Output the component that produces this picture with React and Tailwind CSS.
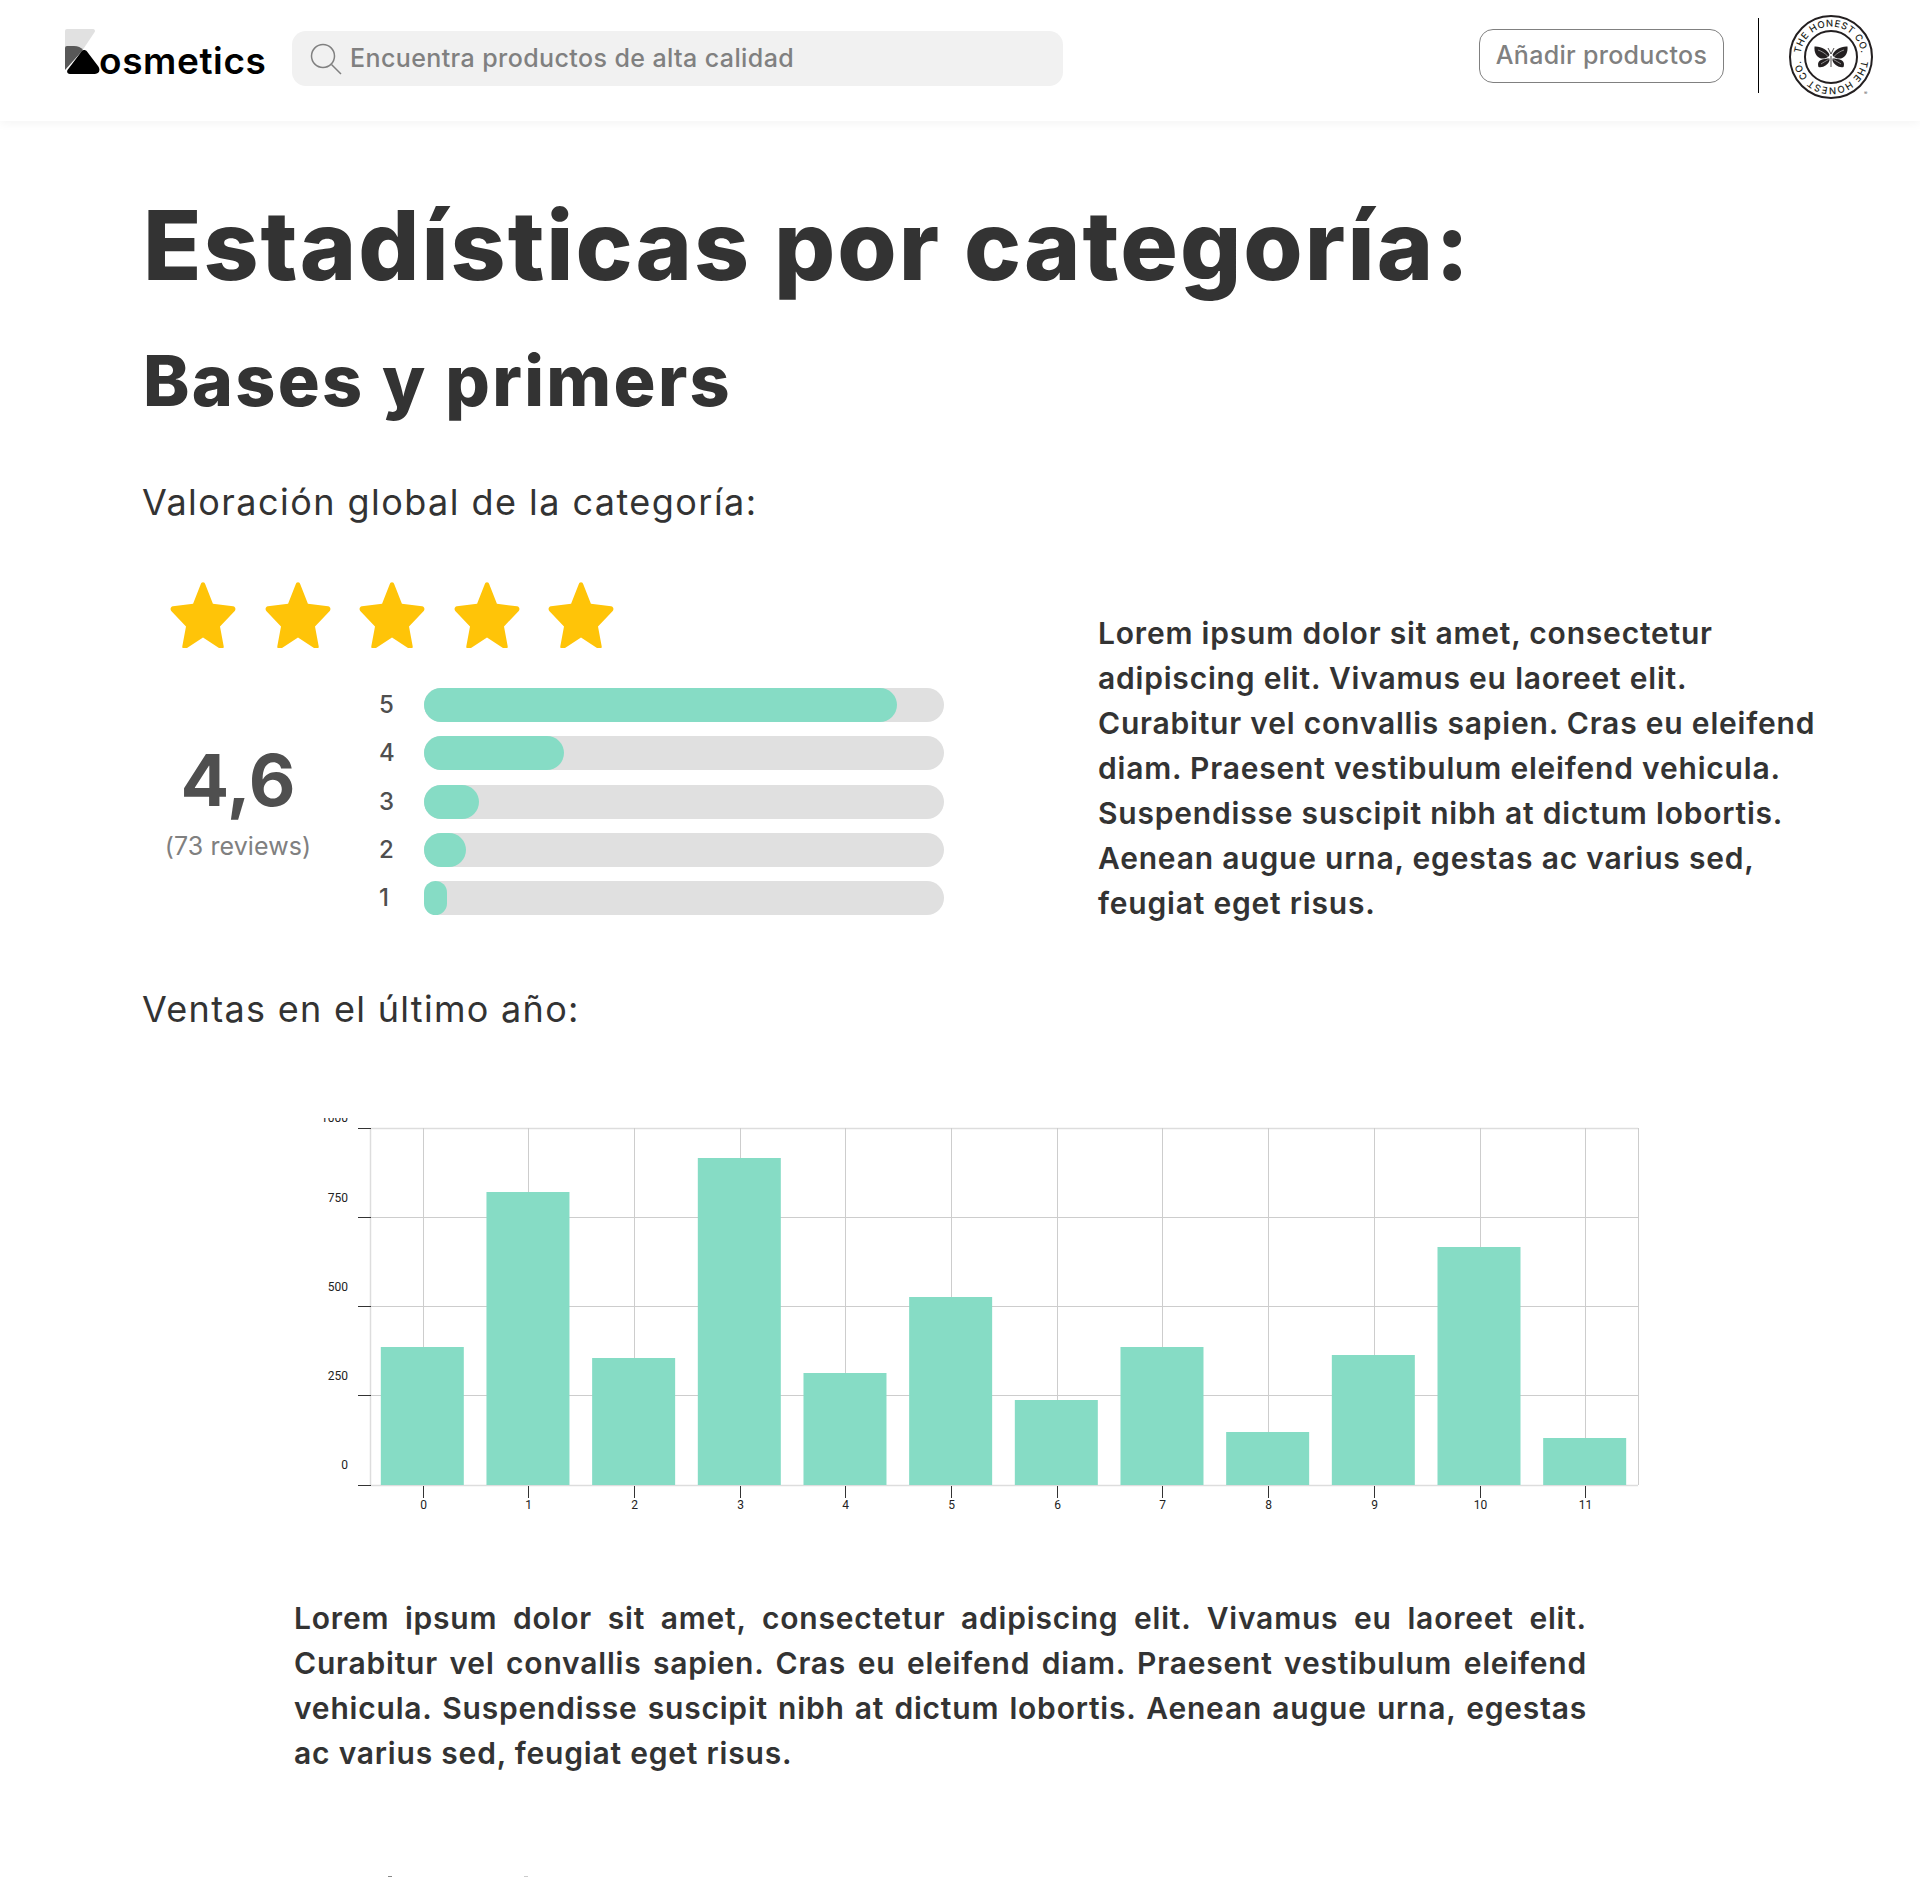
import React from "react";

const sans = "font-['Inter','Liberation_Sans',sans-serif]";

const ratings = [
  { label: 5, width: 473 },
  { label: 4, width: 140 },
  { label: 3, width: 55 },
  { label: 2, width: 42 },
  { label: 1, width: 23 },
];

// top of each bar in the sales chart, in page pixels
const sales = [1347, 1192, 1358, 1158, 1373, 1297, 1400, 1347, 1432, 1355, 1247, 1438];

const LOREM =
  "Lorem ipsum dolor sit amet, consectetur adipiscing elit. Vivamus eu laoreet elit. Curabitur vel convallis sapien. Cras eu eleifend diam. Praesent vestibulum eleifend vehicula. Suspendisse suscipit nibh at dictum lobortis. Aenean augue urna, egestas ac varius sed, feugiat eget risus.";

const Star = () => (
  <svg width="68" height="68" viewBox="0 0 24 24" className="shrink-0">
    <path
      d="M12 .8c.4 0 .7.3.8.7l2.7 6.9 7.1.9c.8.1 1.1 1 .6 1.6l-5.2 5.5 1.3 7c.1.7-.6 1.3-1.2.9L12 20.300l-6.100 4c-.6.4-1.300-.2-1.200-.9l1.300-7-5.200-5.500c-.5-.6-.2-1.500.6-1.600l7.100-.9 2.700-6.900c.1-.4.400-.7.800-.7z"
      fill="#ffc408"
    />
  </svg>
);

const Logo = () => (
  <div className="flex items-end w-[200px] h-[45px] mt-[29px]">
    <svg width="35" height="45" viewBox="0 0 35 45" className="shrink-0">
      <path d="M0 2a2 2 0 0 1 2-2h26a2 2 0 0 1 1.700 3L17 22 0 20z" fill="#e1e1e1" />
      <path d="M0 19q0-2 2-2h7c4 0 7 1.500 9 4L0 41z" fill="#585858" />
      <path d="M16.500 22.500c1.500-2 4-2 5.500 0L33 37c3 4 1 8-3 8H5c-2.500 0-3.500-2-2.500-4z" fill="#000" />
    </svg>
    <span className={`${sans} -ml-px text-[37px] leading-[26px] font-semibold text-black tracking-[0.6px]`}>osmetics</span>
  </div>
);

const ButterflySide = () => (
  <g>
    <path d="M41.500 41C40 36 33 32 26.500 32.500 26 38 28 43 33 44.500c3 .5 7-.5 8.500-3.500z" fill="#231f20" />
    <path d="M41.500 44.500c-3 0-6 .5-8.500 1.500-3 1.500-3.500 4-2.500 7 4.500 1 9.500-2 11-6.500z" fill="#231f20" />
    <path d="M30 36c3 1 7 3 10 6.500M33 50c2-1.500 5-3 7.500-4.500" fill="none" stroke="#fff" strokeWidth="0.500" />
  </g>
);

const HonestLogo = () => (
  <svg width="86" height="86" viewBox="0 0 86 86" className="shrink-0">
    <defs>
      <path id="ring-path" d="M12.500 43a30.500 30.500 0 1 1 61 0a30.500 30.500 0 1 1-61 0" />
    </defs>
    <circle cx="43" cy="43" r="41" fill="none" stroke="#231f20" strokeWidth="2" />
    <circle cx="43" cy="43" r="26" fill="none" stroke="#231f20" strokeWidth="2" />
    <text fontFamily="Inter, sans-serif" fontSize="9.500" fontWeight="500" fill="#231f20" letterSpacing="0.600">
      <textPath href="#ring-path" startOffset="25%" textAnchor="middle">THE HONEST CO.</textPath>
    </text>
    <text fontFamily="Inter, sans-serif" fontSize="9.500" fontWeight="500" fill="#231f20" letterSpacing="0.600" transform="rotate(180 43 43)">
      <textPath href="#ring-path" startOffset="25%" textAnchor="middle">THE HONEST CO.</textPath>
    </text>
    <ButterflySide />
    <g transform="matrix(-1 0 0 1 86 0)">
      <ButterflySide />
    </g>
    <path d="M43 42v11M40 34l3 6 3-6" fill="none" stroke="#231f20" strokeWidth="0.800" />
    <text x="76" y="81" fontFamily="Inter, sans-serif" fontSize="5" fill="#555">®</text>
  </svg>
);

const Header = () => (
  <header className="h-[121px] bg-white shadow-[0_2px_10px_rgba(0,0,0,0.05)] flex items-start pl-[65px] pr-[46px]">
    <Logo />
    <div className="ml-[27px] mt-[31px] w-[771px] h-[55px] bg-[#f1f1f1] rounded-[14px] flex items-center pl-[18px] gap-[8px]">
      <svg width="32" height="32" viewBox="0 0 32 32" fill="none" stroke="#808080" strokeWidth="1.500" className="shrink-0">
        <circle cx="13" cy="13" r="11.500" />
        <path d="M21.500 21.500 31 31" />
      </svg>
      <span className={`${sans} pt-[1px] text-[25px] font-medium text-[#808080] tracking-[0.4px]`}>Encuentra productos de alta calidad</span>
    </div>
    <button className={`${sans} ml-auto mt-[29px] w-[245px] h-[54px] border border-[#808080] rounded-[14px] text-[25px] font-medium text-[#808080] tracking-[0.3px]`}>
      Añadir productos
    </button>
    <div className="ml-[34px] mt-[18px] w-px h-[75px] bg-black" />
    <div className="ml-[29px] mt-[14px]">
      <HonestLogo />
    </div>
  </header>
);

const RatingSummary = () => (
  <div className="w-[955px] shrink-0">
    <div className="flex gap-[26.500px] pl-[26px]">
      <Star /><Star /><Star /><Star /><Star />
    </div>
    <div className="flex mt-[40px]">
      <div className="w-[190px] flex flex-col items-center pt-[52px]">
        <div className={`${sans} text-[72px] leading-[80px] font-bold text-[#4f4f4f]`}>4,6</div>
        <div className={`${sans} mt-[8px] text-[25px] leading-[36px] text-[#808080] tracking-[0.1px]`}>(73 reviews)</div>
      </div>
      <div className="ml-[46px] flex flex-col gap-[14.300px]">
        {ratings.map((r) => (
          <div key={r.label} className="flex items-center h-[34px]">
            <span className={`${sans} w-[45px] text-[24px] font-medium text-[#4f4f4f]`}>{r.label}</span>
            <div className="w-[520px] h-[34px] rounded-full bg-[#e0e0e0]">
              <div className="h-full rounded-full bg-[#86dcc5]" style={{ width: r.width }} />
            </div>
          </div>
        ))}
      </div>
    </div>
  </div>
);

const SalesChart = () => {
  const base = 1485;
  const slot = 105.67;
  const x0 = 423.3;
  const gridX = (i) => Math.floor(x0 + i * slot) + 0.5;
  return (
    <svg width="1340" height="410" viewBox="320 1112 1340 410" className="block">
      <defs>
        <clipPath id="chart-clip">
          <rect x="320" y="1118" width="1340" height="410" />
        </clipPath>
      </defs>
      <g clipPath="url(#chart-clip)" fontFamily="Roboto, sans-serif" fontSize="12" fill="#222">
        {[1217, 1306, 1395].map((y) => (
          <line key={y} x1="371" x2="1638" y1={y + 0.5} y2={y + 0.5} stroke="#cdcdcd" />
        ))}
        <line x1="371" x2="1638" y1="1128.500" y2="1128.500" stroke="#dddddd" strokeWidth="1.500" />
        <line x1="371" x2="1638" y1="1485.500" y2="1485.500" stroke="#dddddd" strokeWidth="1.500" />
        <line x1="370.500" x2="370.500" y1="1128" y2="1485" stroke="#dddddd" strokeWidth="1.500" />
        <line x1="1638.500" x2="1638.500" y1="1128" y2="1485" stroke="#cdcdcd" />
        {sales.map((_, i) => (
          <line key={i} x1={gridX(i)} x2={gridX(i)} y1="1128" y2="1485" stroke="#cdcdcd" />
        ))}
        {sales.map((y, i) => (
          <rect key={i} x={x0 + i * slot - 42.5} y={y} width="83" height={base - y} fill="#86dcc5" />
        ))}
        {[1128, 1217, 1306, 1395, 1485].map((y) => (
          <line key={y} x1="358" x2="371" y1={y + 0.5} y2={y + 0.5} stroke="#333" />
        ))}
        {sales.map((_, i) => (
          <g key={i}>
            <line x1={gridX(i)} x2={gridX(i)} y1="1486" y2="1498" stroke="#333" />
            <text x={gridX(i)} y="1509" textAnchor="middle">{i}</text>
          </g>
        ))}
        <text x="348" y="1122" textAnchor="end">1000</text>
        <text x="348" y="1202" textAnchor="end">750</text>
        <text x="348" y="1291" textAnchor="end">500</text>
        <text x="348" y="1380" textAnchor="end">250</text>
        <text x="348" y="1469" textAnchor="end">0</text>
      </g>
    </svg>
  );
};

export default function App() {
  return (
    <div className="w-[1920px] h-[1878px] overflow-hidden bg-white text-[#333333]">
      <Header />
      <main className="pl-[143px]">
        <h1 className={`${sans} mt-[62px] text-[96px] leading-[124px] font-extrabold tracking-[2px]`}>Estadísticas por categoría:</h1>
        <h2 className={`${sans} mt-[24px] text-[70px] leading-[100px] font-extrabold tracking-[2.300px]`}>Bases y primers</h2>
        <h3 className={`${sans} -ml-px mt-[44px] text-[36px] leading-[54px] font-normal tracking-[1.450px]`}>Valoración global de la categoría:</h3>
        <div className="flex mt-[51px]">
          <RatingSummary />
          <p className={`${sans} w-[730px] mt-[31px] text-[30px] leading-[45px] font-semibold tracking-[0.8px]`}>{LOREM}</p>
        </div>
        <h3 className={`${sans} -ml-px mt-[56px] text-[36px] leading-[54px] font-normal tracking-[1.300px]`}>Ventas en el último año:</h3>
        <div className="mt-[76px] ml-[177px]">
          <SalesChart />
        </div>
        <p className={`${sans} mt-[74px] ml-[151px] w-[1293px] text-[30px] leading-[45px] font-semibold text-justify tracking-[0.8px]`}>{LOREM}</p>
        {/* tops of the next section, cut off by the page bottom */}
        <div className="mt-[100px] ml-[245px] flex gap-[132px]">
          <div className="w-[4px] h-px bg-[#888888]" />
          <div className="w-[4px] h-px bg-[#cccccc]" />
        </div>
      </main>
    </div>
  );
}
